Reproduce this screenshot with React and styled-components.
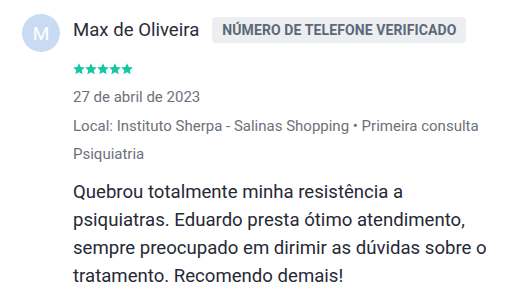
import React from 'react';
import styled, { createGlobalStyle } from 'styled-components';

const GlobalStyle = createGlobalStyle`
  body {
    margin: 0;
    background: #ffffff;
    font-family: 'Roboto', 'Liberation Sans', sans-serif;
  }
`;

const Card = styled.div`
  display: flex;
  align-items: flex-start;
  padding: 14px 0 0 22px;
`;

const Avatar = styled.div`
  width: 38px;
  height: 38px;
  border-radius: 50%;
  background: #c9dbf3;
  color: #ffffff;
  font-size: 19px;
  display: flex;
  align-items: center;
  justify-content: center;
  flex-shrink: 0;
`;

const Body = styled.div`
  margin-left: 13px;
  width: 430px;
`;

const Header = styled.div`
  display: flex;
  align-items: center;
  gap: 13px;
  height: 32px;
`;

const Name = styled.div`
  font-size: 18.6px;
  color: #2a2c38;
`;

const Badge = styled.div`
  background: #eceef1;
  color: #5d6878;
  font-size: 14px;
  font-weight: 700;
  letter-spacing: 0.1px;
  text-transform: uppercase;
  border-radius: 4px;
  padding: 0 10px;
  height: 26px;
  line-height: 26px;
  white-space: nowrap;
`;

const Stars = styled.div`
  display: flex;
  margin-top: 17px;
  height: 12px;
`;

const Meta = styled.div`
  font-size: 15px;
  line-height: 28.5px;
  color: #6e707a;
  margin-top: ${(p) => (p.$first ? '8px' : '0')};
`;

const Review = styled.p`
  margin: 9px 0 0;
  font-size: 18.6px;
  line-height: 28px;
  color: #262936;
`;

const Star = () => (
  <svg width="12" height="12" viewBox="0 0 24 24">
    <path
      fill="#17c6a3"
      d="M12 0.5l3.5 7.4 8.1 1-6 5.6 1.6 8L12 18.6l-7.2 3.9 1.6-8-6-5.6 8.1-1z"
    />
  </svg>
);

export default function App() {
  return (
    <>
      <GlobalStyle />
      <Card>
        <Avatar>M</Avatar>
        <Body>
          <Header>
            <Name>Max de Oliveira</Name>
            <Badge>Número de telefone verificado</Badge>
          </Header>
          <Stars>
            {[0, 1, 2, 3, 4].map((i) => (
              <Star key={i} />
            ))}
          </Stars>
          <Meta $first>27 de abril de 2023</Meta>
          <Meta>Local: Instituto Sherpa - Salinas Shopping • Primeira consulta</Meta>
          <Meta>Psiquiatria</Meta>
          <Review>
            Quebrou totalmente minha resistência a psiquiatras. Eduardo presta ótimo
            atendimento, sempre preocupado em dirimir as dúvidas sobre o tratamento.
            Recomendo demais!
          </Review>
        </Body>
      </Card>
    </>
  );
}
